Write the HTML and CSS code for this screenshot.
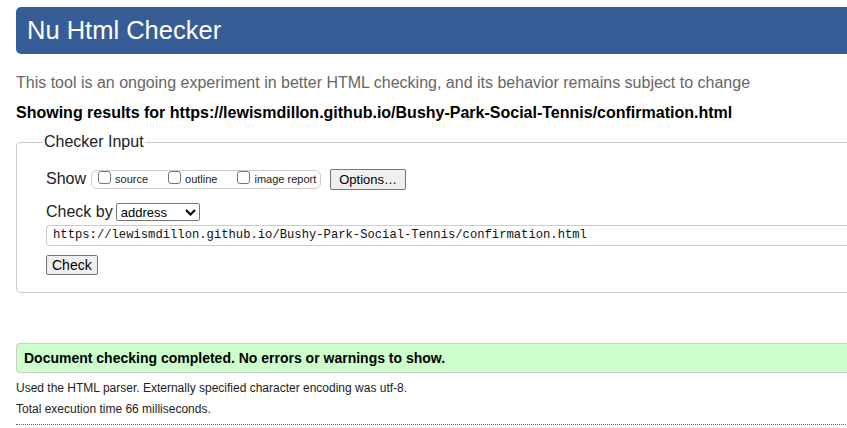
FILE: index.html
```html
<!DOCTYPE html>
<html>
<head>
<meta charset="utf-8">
<link rel="stylesheet" href="styles.css">
</head>
<body>
<div class="page">
  <h1 class="banner">Nu Html Checker</h1>
  <p class="intro">This tool is an ongoing experiment in better HTML checking, and its behavior remains subject to change</p>
  <p class="results-for">Showing results for https://lewismdillon.github.io/Bushy-Park-Social-Tennis/confirmation.html</p>
  <fieldset class="checker">
    <legend>Checker Input</legend>
    <div class="row show-row">
      <span class="lbl">Show</span>
      <span class="opts">
        <label class="opt"><span class="box"></span>source</label>
        <label class="opt"><span class="box"></span>outline</label>
        <label class="opt last"><span class="box"></span>image report</label>
      </span>
      <button class="btn options">Options…</button>
    </div>
    <div class="row by-row">
      <span class="lbl">Check by</span>
      <span class="select">address<svg class="chev" width="11" height="7" viewBox="0 0 11 7"><path d="M1 1 L5.5 5.5 L10 1" fill="none" stroke="#000" stroke-width="2"/></svg></span>
    </div>
    <div class="url">https://lewismdillon.github.io/Bushy-Park-Social-Tennis/confirmation.html</div>
    <button class="btn check">Check</button>
  </fieldset>
  <div class="success">Document checking completed. No errors or warnings to show.</div>
  <p class="meta">Used the HTML parser. Externally specified character encoding was utf-8.</p>
  <p class="meta">Total execution time 66 milliseconds.</p>
  <hr class="dots">
</div>
</body>
</html>
```
FILE: styles.css
```css
html, body {
  margin: 0;
  padding: 0;
  overflow: hidden;
  background: #fff;
}
body {
  font-family: "Liberation Sans", Arial, sans-serif;
  color: #000;
}
.page {
  width: 900px;
  padding: 7px 0 0 16px;
}
.banner {
  margin: 0;
  height: 47px;
  box-sizing: border-box;
  background: #365d95;
  color: #fff;
  font-weight: normal;
  font-size: 25.5px;
  line-height: 47px;
  padding-left: 11px;
  border-radius: 5px 0 0 5px;
}
.intro {
  margin: 19px 0 0;
  font-size: 16px;
  line-height: 20px;
  color: #666;
}
.results-for {
  margin: 10px 0 0;
  font-size: 16px;
  line-height: 20px;
  font-weight: bold;
}
.checker {
  margin: 10px 0 0;
  border: 1px solid #ccc;
  border-radius: 4px;
  padding: 17px 0 17px 29px;
}
.checker legend {
  font-size: 16px;
  line-height: 18px;
  padding: 0 1px;
  margin-left: -3px;
  color: #222;
}
.row {
  display: flex;
  align-items: center;
}
.lbl {
  font-size: 16px;
  color: #222;
}
.show-row {
  height: 22px;
}
.opts {
  display: flex;
  align-items: center;
  height: 17px;
  margin-left: 5px;
  border: 1px solid #ccc;
  border-radius: 6px;
  padding: 0 4px 0 6px;
}
.opt {
  display: flex;
  align-items: center;
  font-size: 11px;
  color: #222;
  margin-right: 20px;
}
.opt.last {
  margin-right: 0;
}
.box {
  width: 11px;
  height: 11px;
  border: 1px solid #767676;
  border-radius: 3px;
  margin-right: 4px;
  margin-top: -4px;
  background: #fff;
}
.btn {
  font-family: "Liberation Sans", Arial, sans-serif;
  font-size: 13px;
  color: #000;
  background: #efefef;
  border: 1px solid #767676;
  border-radius: 2px;
  padding: 0 7px;
  height: 21px;
}
.options {
  margin-left: 9px;
  padding: 0 8px;
}
.by-row {
  margin-top: 12px;
  height: 20px;
}
.select {
  display: flex;
  align-items: center;
  justify-content: space-between;
  margin-left: 3px;
  width: 84px;
  height: 18px;
  box-sizing: border-box;
  border: 1px solid #767676;
  border-radius: 2px;
  padding: 0 3px 0 4px;
  font-size: 13px;
}
.chev {
  display: block;
}
.url {
  margin-top: 3px;
  height: 21px;
  box-sizing: border-box;
  border: 1px solid #ccc;
  border-right: none;
  border-radius: 4px 0 0 4px;
  padding-left: 6px;
  font-family: "Liberation Mono", "DejaVu Sans Mono", monospace;
  font-size: 12.2px;
  line-height: 19px;
  color: #111;
}
.check {
  margin-top: 9px;
  height: 20px;
  font-size: 14px;
  padding: 0 5px;
}
.success {
  margin-top: 50px;
  height: 30px;
  box-sizing: border-box;
  background: #ccffcc;
  border: 1px solid #ccc;
  border-right: none;
  border-radius: 4px 0 0 4px;
  padding-left: 7px;
  font-size: 14px;
  font-weight: bold;
  line-height: 28px;
}
.meta {
  margin: 8px 0 0;
  font-size: 12px;
  line-height: 15px;
  color: #222;
}
.meta + .meta {
  margin-top: 6px;
}
.dots {
  margin: 7px 0 0;
  border: none;
  border-top: 1px dotted #666;
  height: 0;
}
```
